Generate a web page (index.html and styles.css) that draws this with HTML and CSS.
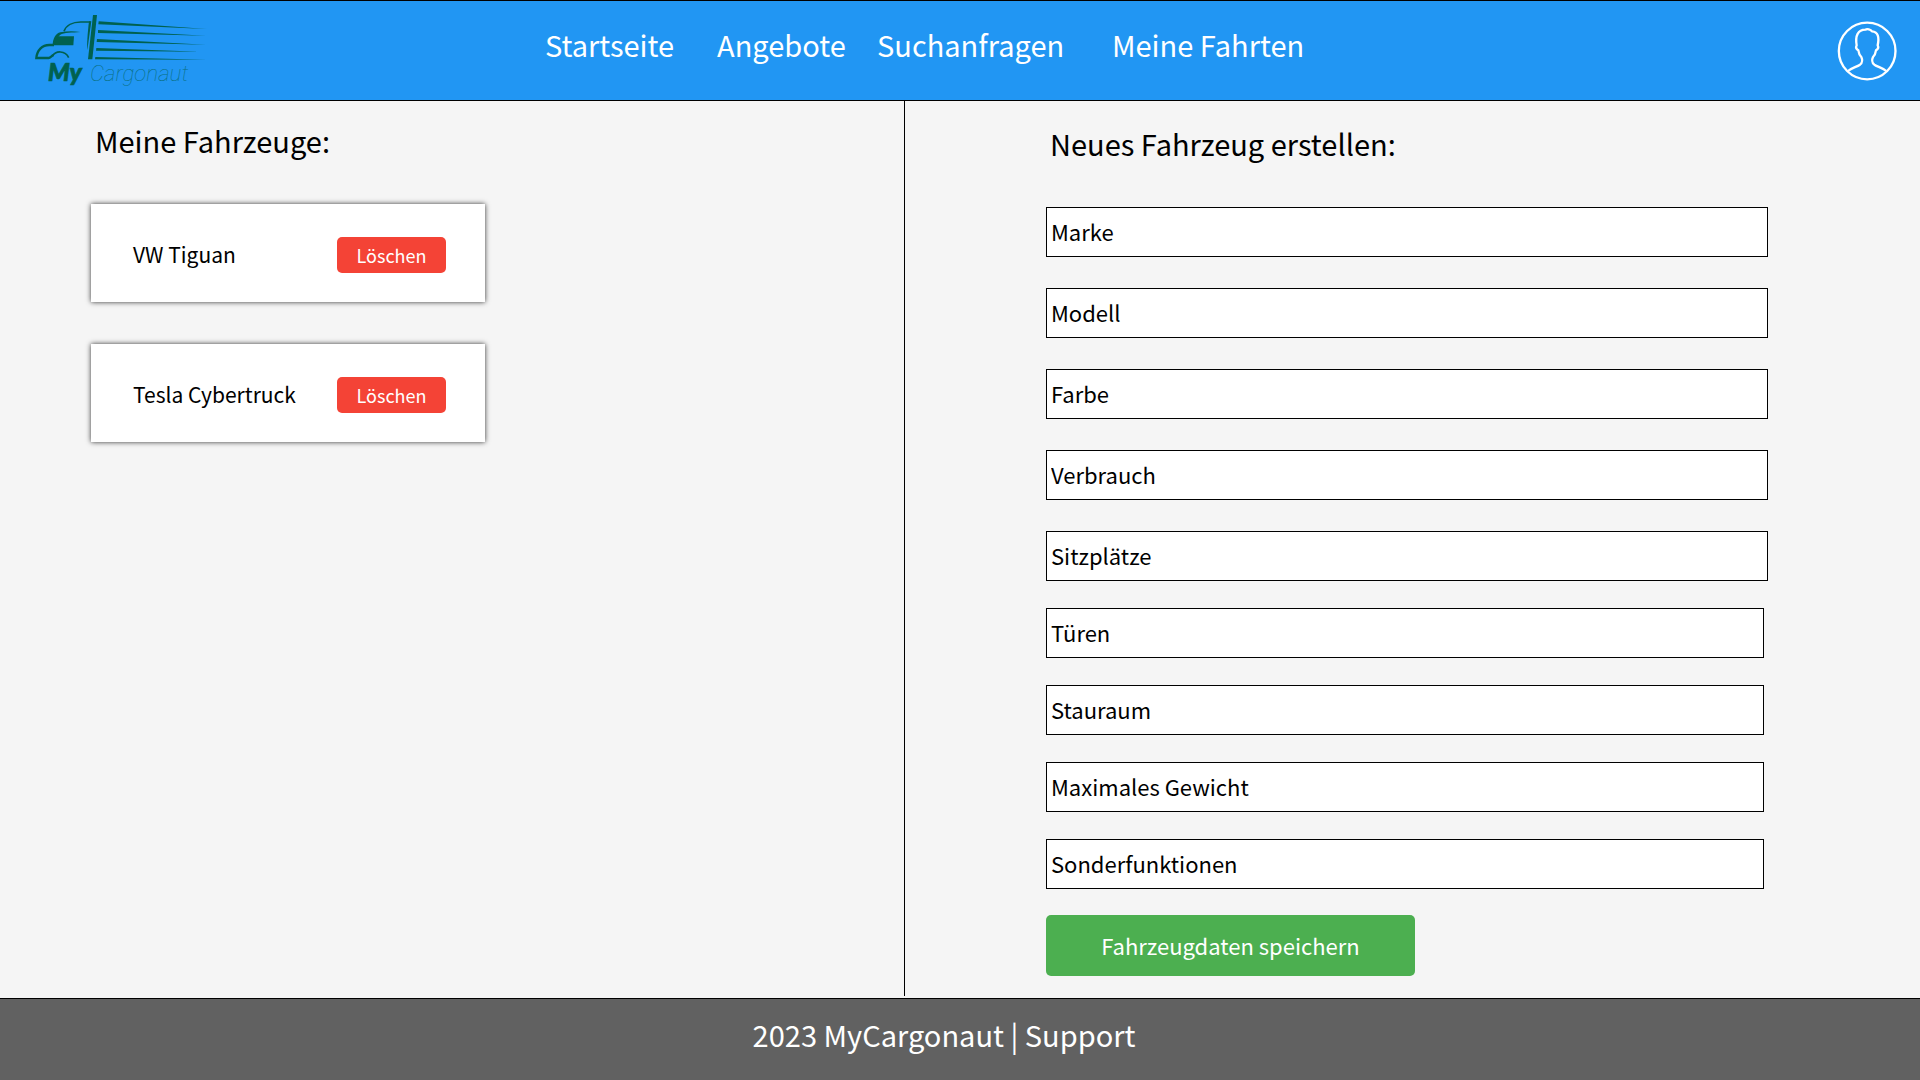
FILE: index.html
```html
<!DOCTYPE html>
<html lang="de">
<head>
<meta charset="utf-8">
<meta name="viewport" content="width=device-width, initial-scale=1">
<title>MyCargonaut – Meine Fahrzeuge</title>
<link rel="stylesheet" href="styles.css">
</head>
<body>
<header class="header">
  <a class="logo" href="#" aria-label="MyCargonaut">
    <svg width="180" height="81" viewBox="45 30 540 243">
      <g fill="#00614f">
        <path d="M219 45h12l-14 133h-13z"/>
        <path d="M236 64l324 23-325-14zM234 90l324 17-324-8zM231 117l327 17-328-8zM229 144l311 11-312-3zM226 171l334 8-335-1z"/>
        <path d="M109 109h53l-2 27h-62c1-10 5-20 11-27z"/>
        <path d="M98 135c1-20 9-35 23-38 20-4 40-4 60-1-24 2-50 2-60 8-8 6-12 16-14 31z"/>
        <path d="M207 64h7l-12 86c-2-16 1-52 5-86z"/>
      </g>
      <g fill="none" stroke="#00614f">
        <path stroke-width="5" d="M132 94c6-18 26-28 50-28h30"/>
        <path stroke-width="7" d="M102 135H88c-22 0-37 16-39 39h37c4 0 8-5 14-9"/>
        <path stroke-width="5" d="M98 168c8-16 38-18 48 5"/>
      </g>
      <text class="logo-my" x="84" y="242">My</text>
      <text class="logo-name" x="210" y="242">Cargonaut</text>
    </svg>
  </a>
  <nav class="nav">
    <a href="#">Startseite</a>
    <a href="#">Angebote</a>
    <a href="#">Suchanfragen</a>
    <a href="#">Meine Fahrten</a>
  </nav>
  <a class="profile" href="#" aria-label="Profil">
    <svg width="60" height="60" viewBox="49 35 180 180" fill="none" stroke="#fff" stroke-width="7" stroke-linejoin="round">
      <circle cx="139.500" cy="125" r="85"/>
      <path d="M82 185c10-9 25-12 36-19 8-6 7-17 4-23-6-6-8-13-9-20-6-3-8-9-5-15-5-29 4-47 26-47 5-3 16-1 20 5 19 1 22 19 17 42 3 6 1 12-5 15-1 7-3 14-9 20-3 6-4 17 4 23 11 7 26 10 36 19"/>
    </svg>
  </a>
</header>

<main class="main">
  <section class="vehicles">
    <h1 class="title">Meine Fahrzeuge:</h1>
    <ul class="cards">
      <li class="card"><span>VW Tiguan</span><button class="delete" type="button">Löschen</button></li>
      <li class="card"><span>Tesla Cybertruck</span><button class="delete" type="button">Löschen</button></li>
    </ul>
  </section>
  <section class="create">
    <h2 class="title">Neues Fahrzeug erstellen:</h2>
    <form class="form">
      <div class="group general">
        <input class="field" type="text" placeholder="Marke" aria-label="Marke">
        <input class="field" type="text" placeholder="Modell" aria-label="Modell">
        <input class="field" type="text" placeholder="Farbe" aria-label="Farbe">
        <input class="field" type="text" placeholder="Verbrauch" aria-label="Verbrauch">
        <input class="field" type="text" placeholder="Sitzplätze" aria-label="Sitzplätze">
      </div>
      <div class="group capacity">
        <input class="field" type="text" placeholder="Türen" aria-label="Türen">
        <input class="field" type="text" placeholder="Stauraum" aria-label="Stauraum">
        <input class="field" type="text" placeholder="Maximales Gewicht" aria-label="Maximales Gewicht">
        <input class="field" type="text" placeholder="Sonderfunktionen" aria-label="Sonderfunktionen">
      </div>
      <button class="save" type="submit">Fahrzeugdaten speichern</button>
    </form>
  </section>
</main>

<footer class="footer">
  <p>2023 MyCargonaut | <a href="#">Support</a></p>
</footer>
</body>
</html>
```
FILE: styles.css
```css
* {
  box-sizing: border-box;
}

body {
  margin: 0;
  min-height: 100vh;
  display: flex;
  flex-direction: column;
  background: #f5f5f5;
  color: #000;
  font-family: "Noto Sans CJK SC", "Noto Sans", sans-serif;
  font-size: 22px;
}

a {
  color: inherit;
  text-decoration: none;
}

button,
input {
  font: inherit;
}

.header {
  display: flex;
  align-items: center;
  padding: 0 23px 0 35px;
  height: 101px;
  border-top: 1px solid #000;
  border-bottom: 1px solid #000;
  background: #2196f3;
  color: #fff;
}

.logo,
.profile {
  display: flex;
}

.logo-my {
  fill: #00614f;
  stroke: #00614f;
  stroke-width: 2px;
  font: italic 900 74px Lato, sans-serif;
}

.logo-name {
  fill: #00614f;
  opacity: 0.7;
  font: italic 100 67px Roboto, sans-serif;
}

.nav {
  display: grid;
  grid-template-columns: 172px 160px 235px auto;
  margin-left: 330px;
  padding-bottom: 14px;
  font-size: 29px;
  line-height: 44px;
}

.profile {
  margin-left: auto;
}

.main {
  flex: 1;
  display: grid;
  grid-template-columns: 905fr 1015fr;
  padding-bottom: 2px;
}

.vehicles {
  padding: 17px 40px 0 91px;
  border-right: 1px solid #000;
}

.create {
  padding: 20px 152px 20px 141px;
}

.title {
  margin: 0;
  padding-left: 4px;
  font-size: 29px;
  font-weight: 400;
  line-height: 44px;
}

.cards {
  display: grid;
  gap: 42px;
  max-width: 394px;
  margin: 42px 0 0;
  padding: 0;
  list-style: none;
}

.card {
  display: flex;
  align-items: center;
  justify-content: space-between;
  height: 98px;
  padding: 4px 39px 0 42px;
  background: #fff;
  box-shadow: 0 0 5px rgba(0, 0, 0, 0.8);
  font-size: 21px;
}

.card span {
  padding-bottom: 3px;
}

.delete {
  width: 109px;
  height: 36px;
  padding: 0;
  border: 0;
  border-radius: 5px;
  background: #f44336;
  color: #fff;
  font-size: 18px;
  line-height: 28px;
}

.form {
  display: grid;
  margin-top: 42px;
}

.group {
  display: grid;
}

.general {
  gap: 31px;
}

.capacity {
  gap: 27px;
  margin: 27px 4px 0 0;
}

.field {
  width: 100%;
  height: 50px;
  padding: 0 4px 3px;
  border: 1px solid #000;
  border-radius: 0;
  background: #fff;
}

.field::placeholder {
  color: #000;
  opacity: 1;
}

.save {
  width: 369px;
  height: 61px;
  margin-top: 26px;
  padding: 0 0 2px;
  border: 0;
  border-radius: 5px;
  background: #4caf50;
  color: #fff;
  font-size: 22px;
}

.footer {
  height: 82px;
  padding: 13px 32px 0 0;
  border-top: 1px solid #000;
  background: #616161;
  color: #fff;
  font-size: 29px;
  line-height: 44px;
  text-align: center;
}

.footer p {
  margin: 0;
}
```
